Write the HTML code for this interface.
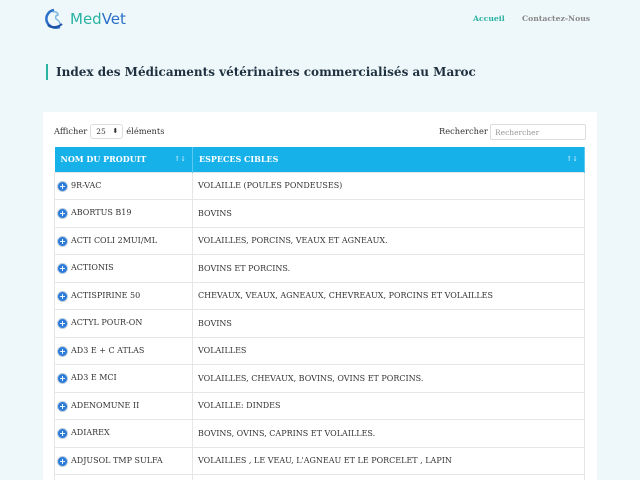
<!DOCTYPE html>
<html><head><meta charset="utf-8"><style>
*{margin:0;padding:0;box-sizing:border-box}
html,body{width:640px;height:480px;overflow:hidden}
body{background:#eef7f9;font-family:"DejaVu Serif","Liberation Serif",serif;color:#333;position:relative}
.logo{position:absolute;left:44px;top:8px;display:flex;align-items:center}
.logo span{font-family:"DejaVu Sans","Liberation Sans",sans-serif;font-size:15px;color:#2ab3a3;margin-left:4px}
.logo span b{font-weight:normal;color:#2a6fc9}
.nav{position:absolute;top:14px;font-size:7.7px;font-weight:bold}
h1{position:absolute;left:46px;top:64px;border-left:2px solid #2ab3a3;padding-left:8px;font-size:12px;color:#1f3140;line-height:16px}
.card{position:absolute;left:43px;top:112px;width:554px;height:368px;background:#fff;overflow:hidden}
.ctl{position:absolute;font-size:8.3px;color:#333;line-height:15px}
.sel{display:inline-block;width:33px;height:15px;border:1px solid #ddd;border-radius:3px;font-size:7.5px;padding:0 5px;line-height:13px;vertical-align:middle;margin:0 3px;position:relative}
.sel:after{content:"⬍";position:absolute;right:4px;top:0;font-size:7px}
.inp{position:absolute;left:447px;top:12px;width:96px;height:16px;border:1px solid #ddd;border-radius:2px;font-size:7.5px;color:#999;padding:3px 4px}
table{position:absolute;left:11px;top:35px;width:531px;border-collapse:collapse;font-size:8px}
th{background:#16b1e9;color:#fff;text-align:left;height:25px;padding:0 6px;font-size:8px;border-right:1px solid #5cc9f0;position:relative}
th i{position:absolute;right:6px;top:7px;font-style:normal;font-size:7px;opacity:.7}
td{height:27.5px;border:1px solid #e6e6e6;padding:0 5px;vertical-align:middle;color:#333}
td:first-child{width:138px;padding-left:3px}
.p{display:inline-block;width:9px;height:9px;border-radius:50%;background:#2a7ad9;color:#fff;font-size:8px;line-height:9px;text-align:center;font-family:"DejaVu Sans",sans-serif;font-weight:bold;margin-right:4px;box-shadow:0 0 0 1px #bcd;vertical-align:-1px}
</style></head><body>
<div class="logo"><svg width="22" height="22" viewBox="0 0 22 22"><path d="M10 2C4 3 1 9 3 14c2 5 8 7 13 5" stroke="#2a6fc9" stroke-width="2.5" fill="none"/><path d="M9 4c3-1 5 1 5 3-2 0-3 2-2 4 2 1 4 3 4 5" stroke="#7fb6e0" stroke-width="1.5" fill="none"/><path d="M4 17c3 3 9 3 14-1" stroke="#1e4fa0" stroke-width="2" fill="none"/></svg><span>Med<b>Vet</b></span></div>
<div class="nav" style="left:473px;color:#2ab3a3">Accueil</div>
<div class="nav" style="left:522px;color:#888">Contactez-Nous</div>
<h1>Index des Médicaments vétérinaires commercialisés au Maroc</h1>
<div class="card">
<div class="ctl" style="left:11px;top:12px">Afficher<span class="sel">25</span>éléments</div>
<div class="ctl" style="left:396px;top:12px">Rechercher</div>
<div class="inp">Rechercher</div>
<table>
<tr><th>NOM DU PRODUIT<i>↑↓</i></th><th>ESPECES CIBLES<i>↑↓</i></th></tr>
<tr><td><span class="p">+</span>9R-VAC</td><td>VOLAILLE (POULES PONDEUSES)</td></tr>
<tr><td><span class="p">+</span>ABORTUS B19</td><td>BOVINS</td></tr>
<tr><td><span class="p">+</span>ACTI COLI 2MUI/ML</td><td>VOLAILLES, PORCINS, VEAUX ET AGNEAUX.</td></tr>
<tr><td><span class="p">+</span>ACTIONIS</td><td>BOVINS ET PORCINS.</td></tr>
<tr><td><span class="p">+</span>ACTISPIRINE 50</td><td>CHEVAUX, VEAUX, AGNEAUX, CHEVREAUX, PORCINS ET VOLAILLES</td></tr>
<tr><td><span class="p">+</span>ACTYL POUR-ON</td><td>BOVINS</td></tr>
<tr><td><span class="p">+</span>AD3 E + C ATLAS</td><td>VOLAILLES</td></tr>
<tr><td><span class="p">+</span>AD3 E MCI</td><td>VOLAILLES, CHEVAUX, BOVINS, OVINS ET PORCINS.</td></tr>
<tr><td><span class="p">+</span>ADENOMUNE II</td><td>VOLAILLE: DINDES</td></tr>
<tr><td><span class="p">+</span>ADIAREX</td><td>BOVINS, OVINS, CAPRINS ET VOLAILLES.</td></tr>
<tr><td><span class="p">+</span>ADJUSOL TMP SULFA</td><td>VOLAILLES , LE VEAU, L'AGNEAU ET LE PORCELET , LAPIN</td></tr>
<tr><td>&nbsp;</td><td>&nbsp;</td></tr>
</table>
</div>
</body></html>
